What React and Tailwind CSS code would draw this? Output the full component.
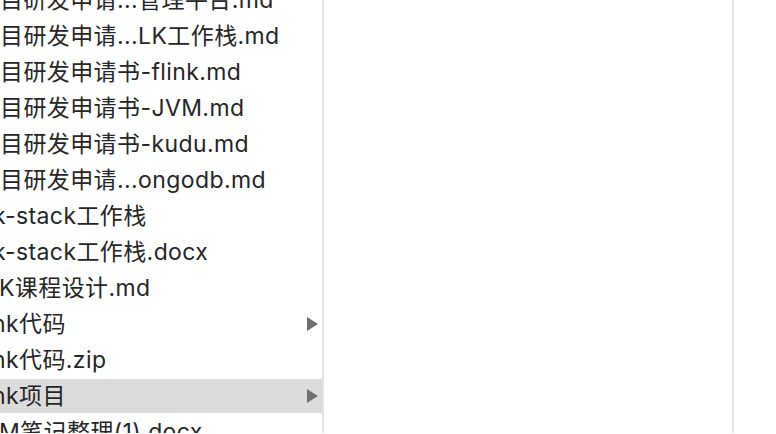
const rows = [
  { name: '目研发申请...管理平台.md', shift: 'ml-0' },
  { name: '目研发申请...LK工作栈.md', shift: 'ml-0' },
  { name: '目研发申请书-flink.md', shift: 'ml-0' },
  { name: '目研发申请书-JVM.md', shift: 'ml-0' },
  { name: '目研发申请书-kudu.md', shift: 'ml-0' },
  { name: '目研发申请...ongodb.md', shift: 'ml-0' },
  { name: 'k-stack工作栈', shift: 'ml-[-7px]' },
  { name: 'k-stack工作栈.docx', shift: 'ml-[-7px]' },
  { name: 'K课程设计.md', shift: 'ml-[-1px]' },
  { name: 'nk代码', shift: 'ml-[-8px]', folder: true },
  { name: 'nk代码.zip', shift: 'ml-[-8px]' },
  { name: 'nk项目', shift: 'ml-[-8px]', folder: true, selected: true },
  { name: 'M笔记整理(1).docx', shift: 'ml-[-1px]' },
];

function Arrow() {
  return (
    <svg width="11" height="14" viewBox="0 0 11 14" className="shrink-0">
      <path d="M0 0 L11 7 L0 14 Z" fill="#707070" />
    </svg>
  );
}

export default function App() {
  return (
    <div className="w-[776px] h-[434px] bg-white overflow-hidden flex font-['Inter','Noto_Sans_CJK_SC',sans-serif]">
      {/* file column */}
      <div className="w-[322px] h-[433px] overflow-hidden">
        <div className="mt-[-18px] flex flex-col">
          {rows.map((r) => (
            <div key={r.name} className="h-[36px] py-[1px]">
              <div
                className={`h-[34px] flex items-center pr-[4px] ${r.selected ? 'bg-[#dcdcdc]' : ''}`}
              >
                <span
                  className={`flex-1 whitespace-nowrap text-[23px] tracking-[0.4px] leading-none text-[#262626] ${r.shift}`}
                >
                  {r.name}
                </span>
                {r.folder && <Arrow />}
              </div>
            </div>
          ))}
        </div>
      </div>
      <div className="w-[2px] h-[433px] bg-[#e4e4e4]" />
      {/* empty preview column */}
      <div className="w-[408px] h-[433px]" />
      <div className="w-[2px] h-[433px] bg-[#e4e4e4]" />
      <div className="flex-1" />
    </div>
  );
}
